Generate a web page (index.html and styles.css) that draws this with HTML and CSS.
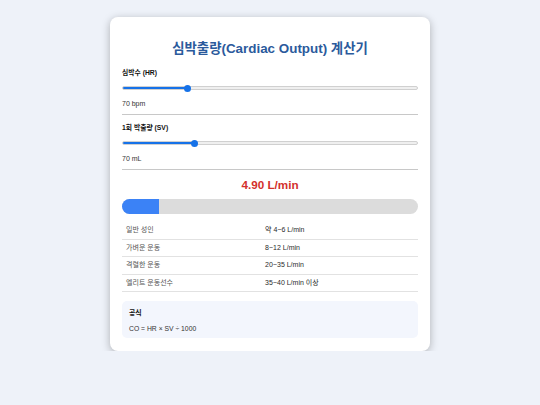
FILE: index.html
```html
<!DOCTYPE html>
<html lang="ko">
<head>
<meta charset="utf-8">
<title>심박출량 계산기</title>
<link rel="stylesheet" href="styles.css">
</head>
<body>
<div class="card">
  <h1 class="title">심박출량(Cardiac Output) 계산기</h1>

  <div class="group">
    <label class="label" for="hr">심박수 (HR)</label>
    <input class="range" id="hr" type="range" min="40" max="180" value="70" style="--p:22%">
    <div class="value">70 bpm</div>
  </div>

  <div class="group">
    <label class="label" for="sv">1회 박출량 (SV)</label>
    <input class="range" id="sv" type="range" min="30" max="200" value="70" style="--p:24.5%">
    <div class="value">70 mL</div>
  </div>

  <div class="result">4.90 L/min</div>

  <div class="bar"><div class="bar-fill" style="width:12.5%"></div></div>

  <table class="ref">
    <tr><td>일반 성인</td><td>약 4~6 L/min</td></tr>
    <tr><td>가벼운 운동</td><td>8~12 L/min</td></tr>
    <tr><td>격렬한 운동</td><td>20~35 L/min</td></tr>
    <tr><td>엘리트 운동선수</td><td>35~40 L/min 이상</td></tr>
  </table>

  <div class="formula">
    <div class="formula-title">공식</div>
    <div class="formula-text">CO = HR × SV ÷ 1000</div>
  </div>
</div>
</body>
</html>
```

FILE: styles.css
```css
html, body {
  margin: 0;
  padding: 0;
}
body {
  background: #eef2f9;
  font-family: "Liberation Sans", Arial, "Noto Sans CJK KR", sans-serif;
  color: #222;
  padding-top: 17px;
}
.card {
  width: 296px;
  margin: 0 auto;
  background: #fff;
  border-radius: 8px;
  box-shadow: 0 2px 9px rgba(0, 0, 0, 0.28);
  padding: 24px 12px 13px;
}
.title {
  margin: 0 0 11px;
  text-align: center;
  font-size: 13.4px;
  line-height: 16px;
  font-weight: bold;
  color: #2b5a9c;
}
.group {
  display: flex;
  flex-direction: column;
  padding-bottom: 6.5px;
  border-bottom: 1px solid #c8c8c8;
  margin-bottom: 8px;
}
.label {
  font-size: 6.8px;
  line-height: 9px;
  font-weight: bold;
  color: #111;
  margin-bottom: 7.5px;
}
.value {
  font-size: 7px;
  line-height: 9px;
  color: #333;
  margin-top: 7px;
}
.range {
  -webkit-appearance: none;
  appearance: none;
  display: block;
  width: 100%;
  height: 7px;
  margin: 0;
  padding: 0;
  background: transparent;
  outline: none;
}
.range::-webkit-slider-runnable-track {
  height: 4px;
  border-radius: 2px;
  box-sizing: border-box;
  border: 1px solid #d0d0d0;
  background-color: #efefef;
  background-image: linear-gradient(#1672e8, #1672e8);
  background-size: var(--p) 100%;
  background-repeat: no-repeat;
}
.range::-webkit-slider-thumb {
  -webkit-appearance: none;
  appearance: none;
  width: 7px;
  height: 7px;
  border-radius: 50%;
  background: #1672e8;
  margin-top: -2.5px;
  border: none;
}
.result {
  text-align: center;
  font-size: 11.7px;
  line-height: 14px;
  font-weight: bold;
  color: #d3302c;
}
.bar {
  margin-top: 7px;
  height: 15px;
  border-radius: 8px;
  background: #dcdcdc;
  overflow: hidden;
}
.bar-fill {
  height: 100%;
  background: #3b82f6;
}
.ref {
  width: 100%;
  margin-top: 8px;
  border-collapse: collapse;
  font-size: 7px;
}
.ref td {
  padding: 4px 4px;
  line-height: 8.5px;
  border-bottom: 1px solid #e2e2e2;
  color: #2a2a2a;
}
.ref td:first-child {
  width: 47%;
  color: #555;
}
.formula {
  margin-top: 9px;
  background: #f3f6fd;
  border-radius: 5px;
  padding: 7px 7px 5.5px;
}
.formula-title {
  font-size: 6.9px;
  line-height: 9px;
  font-weight: bold;
  color: #111;
}
.formula-text {
  margin-top: 6.5px;
  font-size: 6.8px;
  line-height: 9px;
  color: #333;
}
```
